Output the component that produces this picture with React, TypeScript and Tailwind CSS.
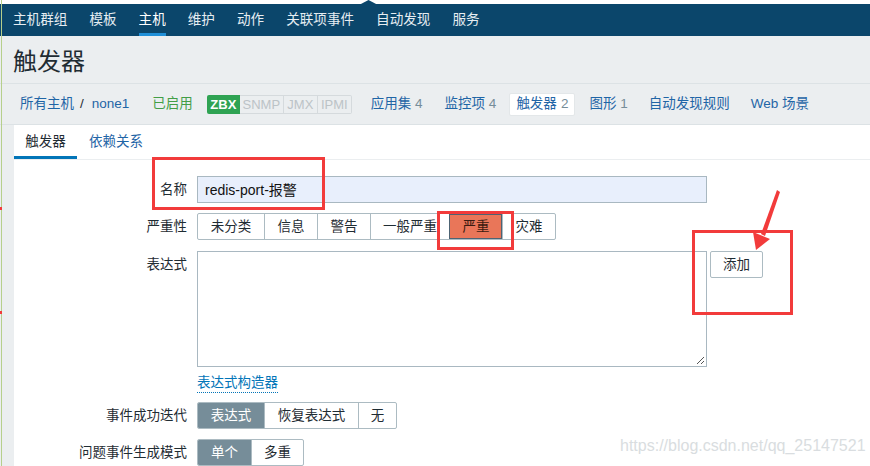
import React from "react";

const FONT = { fontFamily: '"Liberation Sans", "Noto Sans CJK SC", sans-serif' };

function SegGroup({
  items,
}: {
  items: { label: string; w: string; sel?: "gray" | "red" }[];
}) {
  return (
    <div className="flex h-[27px] rounded-[2px] border border-[#acbbc2] bg-white overflow-hidden">
      {items.map((it, i) => (
        <div
          key={i}
          className={
            "flex items-center justify-center text-[13.5px] leading-none " +
            it.w +
            " " +
            (i > 0 ? "border-l border-[#acbbc2] " : "") +
            (it.sel === "gray"
              ? "bg-[#768d99] text-white"
              : it.sel === "red"
              ? "bg-[#e97659] text-[#3a1a10] outline outline-1 outline-[#4d6373] -outline-offset-1"
              : "text-[#1f2c33]")
          }
        >
          {it.label}
        </div>
      ))}
    </div>
  );
}

export default function App() {
  const nav = ["主机群组", "模板", "主机", "维护", "动作", "关联项事件", "自动发现", "服务"];
  return (
    <div
      className="relative w-[870px] h-[466px] overflow-hidden bg-[#ebeef0] text-[#1f2c33]"
      style={FONT}
    >
      {/* top white strip */}
      <div className="h-[4px] bg-white" />
      {/* nav */}
      <div className="h-[32px] bg-[#0b466b] flex items-stretch pl-[13px] gap-[22px]">
        {nav.map((n) => (
          <div
            key={n}
            className={
              "flex items-center text-[13.6px] leading-none " +
              (n === "主机"
                ? "text-white border-b-[3px] border-[#1f8fd8] pt-[3px]"
                : "text-[#e6edf2]")
            }
          >
            {n}
          </div>
        ))}
      </div>
      {/* title */}
      <div className="h-[48px] border-b border-[#dce2e5] pl-[13px] flex items-center">
        <span className="text-[24px] leading-none text-[#1f2c33] pt-[4px]">触发器</span>
      </div>
      {/* host nav */}
      <div className="h-[41px] border-b border-[#dce2e5] flex items-center text-[13.5px] leading-none">
        <span className="ml-[20px] text-[#1f65a6]">所有主机</span>
        <span className="ml-[6px] text-[#1f2c33]">/</span>
        <span className="ml-[8px] text-[#1f65a6]">none1</span>
        <span className="ml-[23px] text-[#429e47]">已启用</span>
        <div className="ml-[14px] flex h-[19px] items-stretch text-[13px] font-bold">
          <span className="w-[33px] flex items-center justify-center rounded-l-[2px] bg-[#2fa353] text-white">
            ZBX
          </span>
          <span className="w-[44px] flex items-center justify-center border border-l-0 border-[#d5dadd] text-[#bcc3c7] font-normal">
            SNMP
          </span>
          <span className="w-[34px] flex items-center justify-center border border-l-0 border-[#d5dadd] text-[#bcc3c7] font-normal">
            JMX
          </span>
          <span className="w-[34px] flex items-center justify-center border border-l-0 border-[#d5dadd] text-[#bcc3c7] font-normal rounded-r-[2px]">
            IPMI
          </span>
        </div>
        <span className="ml-[19px] text-[#1f65a6]">
          应用集 <span className="text-[#768d99]">4</span>
        </span>
        <span className="ml-[22px] text-[#1f65a6]">
          监控项 <span className="text-[#768d99]">4</span>
        </span>
        <span className="ml-[13px] h-[23px] px-[6px] flex items-center bg-white rounded-[2px] border border-[#e3e7e9] text-[#1f65a6]">
          触发器 <span className="ml-[4px] text-[#768d99]">2</span>
        </span>
        <span className="ml-[14px] text-[#1f65a6]">
          图形 <span className="text-[#768d99]">1</span>
        </span>
        <span className="ml-[21px] text-[#1f65a6]">自动发现规则</span>
        <span className="ml-[21px] text-[#1f65a6]">Web 场景</span>
      </div>

      {/* content panel */}
      <div className="ml-[14px] bg-white h-[341px]">
        {/* tabs */}
        <div className="h-[35px] border-b border-[#ebeef0] flex items-stretch text-[13.5px] leading-none">
          <div className="w-[63px] flex items-center justify-center border-b-[3px] border-[#0275b8] pt-[3px] text-[#1f2c33]">
            触发器
          </div>
          <div className="ml-[12px] flex items-center text-[#1f65a6]">依赖关系</div>
        </div>

        {/* form */}
        <div className="text-[13.5px] leading-none">
          <div className="mt-[16px] flex items-center h-[27px]">
            <div className="w-[173px] text-right">名称</div>
            <div className="ml-[10px] w-[510px] h-[27px] border border-[#a9b8c1] bg-[#e8effc] flex items-center pl-[7px] text-[14px] text-[#111]">
              redis-port-报警
            </div>
          </div>

          <div className="mt-[10px] flex items-center h-[27px]">
            <div className="w-[173px] text-right">严重性</div>
            <div className="ml-[10px]">
              <SegGroup
                items={[
                  { label: "未分类", w: "w-[66px]" },
                  { label: "信息", w: "w-[53px]" },
                  { label: "警告", w: "w-[53px]" },
                  { label: "一般严重", w: "w-[79px]" },
                  { label: "严重", w: "w-[53px]", sel: "red" },
                  { label: "灾难", w: "w-[53px]" },
                ]}
              />
            </div>
          </div>

          <div className="mt-[11px] flex items-start">
            <div className="w-[173px] text-right pt-[7px]">表达式</div>
            <div className="ml-[10px] w-[510px] h-[116px] border border-[#a9b8c1] bg-white relative">
              <svg className="absolute right-[1px] bottom-[1px]" width="10" height="10" viewBox="0 0 10 10">
                <line x1="9" y1="2" x2="2" y2="9" stroke="#555" strokeWidth="1" />
                <line x1="9" y1="6" x2="6" y2="9" stroke="#555" strokeWidth="1" />
              </svg>
            </div>
            <div className="ml-[3px] w-[53px] h-[27px] border border-[#acbbc2] rounded-[2px] flex items-center justify-center">
              添加
            </div>
          </div>

          <div className="mt-[8px] flex h-[18px] items-start">
            <div className="w-[173px]" />
            <div className="ml-[10px] text-[#0275b8] border-b border-dotted border-[#0275b8] pb-[2px] pt-[1px]">
              表达式构造器
            </div>
          </div>

          <div className="mt-[9px] flex items-center h-[27px]">
            <div className="w-[173px] text-right">事件成功迭代</div>
            <div className="ml-[10px]">
              <SegGroup
                items={[
                  { label: "表达式", w: "w-[66px]", sel: "gray" },
                  { label: "恢复表达式", w: "w-[94px]" },
                  { label: "无", w: "w-[38px]" },
                ]}
              />
            </div>
          </div>

          <div className="mt-[10px] flex items-center h-[27px]">
            <div className="w-[173px] text-right">问题事件生成模式</div>
            <div className="ml-[10px]">
              <SegGroup
                items={[
                  { label: "单个", w: "w-[53px]", sel: "gray" },
                  { label: "多重", w: "w-[52px]" },
                ]}
              />
            </div>
          </div>
        </div>
      </div>

      {/* overlays: top notch */}
      <svg className="absolute left-[359px] top-0" width="19" height="5" viewBox="0 0 19 5">
        <polygon points="0,5 9.5,0 19,5" fill="#0b466b" />
      </svg>

      {/* left edge line & marks */}
      <div className="absolute left-[1px] top-0 w-[1px] h-[466px] bg-[#b6cf8c]" />
      <div className="absolute left-0 top-[207px] w-[2px] h-[3px] bg-[#f23b3b]" />
      <div className="absolute left-0 top-[311px] w-[2px] h-[3px] bg-[#f23b3b]" />

      {/* annotations */}
      <div className="absolute left-[152px] top-[157px] w-[173px] h-[53px] border-[3px] border-[#f23b3b]" />
      <div className="absolute left-[437px] top-[211px] w-[77px] h-[39px] border-[3px] border-[#f23b3b]" />
      <div className="absolute left-[692px] top-[230px] w-[101px] h-[85px] border-[3px] border-[#f23b3b]" />
      <svg className="absolute left-0 top-0 pointer-events-none" width="870" height="466">
        <polygon points="777,190 780,192 765,236 761,234" fill="#f23b3b" />
        <polygon points="756,250 753,232 770,239" fill="#f23b3b" />
      </svg>

      {/* watermark */}
      <div className="absolute left-[620px] top-[438px] text-[16px] leading-none text-[#d9dde0]">
        https://blog.csdn.net/qq_25147521
      </div>
    </div>
  );
}
